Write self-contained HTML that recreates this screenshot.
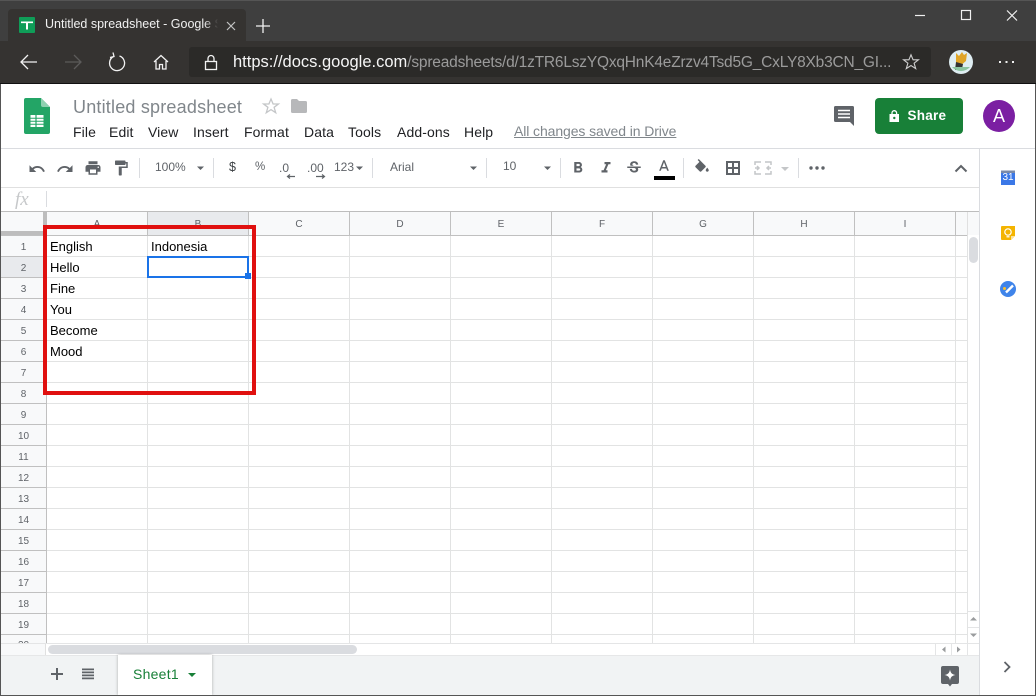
<!DOCTYPE html>
<html><head><meta charset="utf-8"><style>
html,body{margin:0;padding:0;width:1036px;height:696px;overflow:hidden;background:#fff;font-family:"Liberation Sans",sans-serif}
#r{position:relative;width:1036px;height:696px;overflow:hidden}
.a,.t{position:absolute}
.t{white-space:nowrap;line-height:1}
svg.a{overflow:visible}
.m{font-size:14px;color:#202124;top:125px;letter-spacing:.1px}
.h{font-size:10px;color:#5f6368;top:220px;width:100px;text-align:center}
.n{font-size:10px;color:#5f6368;left:1px;width:45px;text-align:center}
.c{font-size:13px;color:#000;left:50px}
.tb{font-size:12px;color:#5f6368;top:161px}
</style></head><body><div id="r">
<!-- chrome -->
<div class="a" style="left:0;top:0;width:1036px;height:41px;background:#3f3f3f"></div>
<div class="a" style="left:0;top:0;width:1036px;height:1px;background:#555"></div>
<div class="a" style="left:0;top:41px;width:1036px;height:42px;background:#353331"></div>
<div class="a" style="left:0;top:83px;width:1036px;height:1px;background:#111"></div>
<div class="a" style="left:8px;top:9px;width:238px;height:32px;background:#353331;border-radius:4px 4px 0 0"></div>
<div class="a" style="left:19px;top:17px;width:16px;height:16px;background:#0f9d58;border-radius:1px"></div>
<svg class="a" style="left:19px;top:17px" width="16" height="16"><path d="M2 4.500h12v1.600H9v6.400H7V6.100H2z" fill="#fff"/></svg>
<div class="t" style="left:45px;top:18px;font-size:12.500px;color:#f1f1f1;width:173px;overflow:hidden">Untitled spreadsheet - Google Sheets</div>
<div class="a" style="left:204px;top:16px;width:14px;height:18px;background:linear-gradient(90deg,rgba(53,51,49,0),#353331)"></div>
<svg class="a" style="left:225px;top:20px" width="12" height="12"><path d="M2 2l8 8M10 2l-8 8" stroke="#c4c4c4" stroke-width="1.200"/></svg>
<svg class="a" style="left:255px;top:18px" width="16" height="16"><path d="M8 1v14M1 8h14" stroke="#f0f0f0" stroke-width="1.300"/></svg>
<svg class="a" style="left:912px;top:8px" width="120" height="20" fill="none" stroke="#f0f0f0" stroke-width="1.200"><path d="M3 7.500h10"/><rect x="49.500" y="2.500" width="9" height="9"/><path d="M95 2.500l10 10M105 2.500l-10 10"/></svg>
<svg class="a" style="left:18px;top:50px" width="160" height="24" fill="none" stroke="#f2f2f2" stroke-width="1.300"><path d="M3 12h16M10 5l-7 7 7 7"/><path d="M47 12h16M56 5l7 7-7 7" stroke="#5c5b5a"/><path d="M95.500 6.500a7.500 7.500 0 1 0 6 -0.500M95 2.500l1 4-4 1" /><path d="M136 12l7-6.500 7 6.500M138 11v8h3.500v-4.500h3V19h3.500v-8"/></svg>
<div class="a" style="left:189px;top:47px;width:742px;height:30px;background:#2b2a28;border-radius:3px"></div>
<svg class="a" style="left:203px;top:54px" width="16" height="17" fill="none" stroke="#f2f2f2" stroke-width="1.300"><rect x="2.500" y="7.500" width="11" height="8"/><path d="M5 7.500V4.500a3 3 0 0 1 6 0v3"/></svg>
<div class="t" style="left:233px;top:54px;font-size:16.500px;color:#f5f5f5;width:660px;overflow:hidden">https://docs.google.com<span style="color:#9b9b9b;font-size:15.500px;letter-spacing:-.2px">/spreadsheets/d/1zTR6LszYQxqHnK4eZrzv4Tsd5G_CxLY8Xb3CN_GI...</span></div>
<svg class="a" style="left:902px;top:53px" width="18" height="18" fill="none" stroke="#cfcfcf" stroke-width="1.100"><path d="M9 1.800l2.100 5h5.300l-4.300 3.400 1.600 5.400L9 12.500l-4.700 3.100 1.600-5.400L1.600 6.800h5.300z"/></svg>
<svg class="a" style="left:949px;top:50px" width="24" height="24"><circle cx="12" cy="12" r="12" fill="#dfeef2"/><path d="M7 3l3 3 3-4 2 3 3-2-1 8-6 5-4-4z" fill="#e0a527"/><path d="M7 12l7 2-1 5-7 1z" fill="#333"/><path d="M3 17h18a12 12 0 0 1-18 0z" fill="#8bc4a0"/></svg>
<svg class="a" style="left:999px;top:60px" width="16" height="4" fill="#f0f0f0"><rect x="0" y="1" width="2" height="2"/><rect x="6.500" y="1" width="2" height="2"/><rect x="13" y="1" width="2" height="2"/></svg>
<!-- window edges -->
<div class="a" style="left:0;top:84px;width:1px;height:612px;background:#555;z-index:9"></div>
<div class="a" style="left:1035px;top:84px;width:1px;height:612px;background:#555;z-index:9"></div>
<div class="a" style="left:0;top:695px;width:1036px;height:1px;background:#555;z-index:9"></div>
<!-- header -->
<svg class="a" style="left:24px;top:98px" width="26" height="36"><path d="M2 0h15l9 9v25a2 2 0 0 1-2 2H2a2 2 0 0 1-2-2V2a2 2 0 0 1 2-2z" fill="#23a566"/><path d="M17 0l9 9h-7a2 2 0 0 1-2-2z" fill="#8ed1b1"/><path d="M6.500 17h13v12h-13z" fill="#fff"/><path d="M6.500 20.200h13M6.500 23.200h13M6.500 26.200h13" stroke="#23a566" stroke-width="1"/><path d="M12 17v12" stroke="#23a566" stroke-width="1.200"/></svg>
<div class="t" style="left:73px;top:98px;font-size:18px;color:#80868b;letter-spacing:.2px">Untitled spreadsheet</div>
<svg class="a" style="left:262px;top:97px" width="18" height="18" fill="none" stroke="#c4c6c8" stroke-width="1.300"><path d="M9 2l2.100 5h5.300l-4.300 3.300 1.600 5.400L9 12.600l-4.700 3.100 1.600-5.400L1.600 7h5.300z"/></svg>
<svg class="a" style="left:291px;top:99px" width="16" height="14"><path d="M1.500 0H6l2 2h6.500A1.500 1.500 0 0 1 16 3.500v9a1.500 1.500 0 0 1-1.500 1.500h-13A1.500 1.500 0 0 1 0 12.500v-11A1.500 1.500 0 0 1 1.500 0z" fill="#b7b8ba"/></svg>
<span class="t m" style="left:73px">File</span><span class="t m" style="left:109px">Edit</span><span class="t m" style="left:148px">View</span><span class="t m" style="left:193px">Insert</span><span class="t m" style="left:244px">Format</span><span class="t m" style="left:304px">Data</span><span class="t m" style="left:348px">Tools</span><span class="t m" style="left:397px">Add-ons</span><span class="t m" style="left:464px">Help</span>
<span class="t" style="left:514px;top:124px;font-size:14px;color:#80868b;text-decoration:underline;letter-spacing:-.1px">All changes saved in Drive</span>
<svg class="a" style="left:834px;top:106px" width="20" height="20"><path d="M1.500 0h17A1.500 1.500 0 0 1 20 1.500V20l-4-4H1.500A1.500 1.500 0 0 1 0 14.500v-13A1.500 1.500 0 0 1 1.500 0z" fill="#5f6368"/><path d="M4 4.500h12M4 8h12M4 11.500h12" stroke="#fff" stroke-width="1.600"/></svg>
<div class="a" style="left:875px;top:98px;width:88px;height:36px;background:#188038;border-radius:4px"></div>
<svg class="a" style="left:889px;top:109px" width="12" height="13"><path d="M1 5.500h8.500v7H1z" fill="#fff" stroke="#fff"/><path d="M3 5.500V4a2.300 2.300 0 0 1 4.600 0v1.500" fill="none" stroke="#fff" stroke-width="1.300"/><circle cx="5.300" cy="9" r="1.200" fill="#188038"/></svg>
<div class="t" style="left:907.500px;top:109px;font-size:13.500px;font-weight:700;color:#fff;letter-spacing:.25px">Share</div>
<div class="a" style="left:983px;top:100px;width:32px;height:32px;border-radius:50%;background:#7b1fa2"></div>
<div class="t" style="left:983px;top:107px;width:32px;text-align:center;font-size:18px;color:#fff">A</div>
<div class="a" style="left:1px;top:148px;width:1034px;height:1px;background:#dadce0"></div>
<div class="a" style="left:979px;top:149px;width:1px;height:546px;background:#dadce0"></div>
<!-- toolbar -->
<svg class="a" style="left:28px;top:160px" width="18" height="18" viewBox="0 0 24 24" fill="#5f6368"><path d="M12.500 8c-2.650 0-5.050.99-6.900 2.600L2 7v9h9l-3.620-3.620c1.390-1.160 3.160-1.880 5.120-1.880 3.540 0 6.550 2.310 7.600 5.500l2.370-.78C21.080 11.030 17.150 8 12.500 8z"/></svg>
<svg class="a" style="left:56px;top:160px" width="18" height="18" viewBox="0 0 24 24" fill="#5f6368"><path d="M18.400 10.600C16.550 8.990 14.150 8 11.500 8c-4.650 0-8.580 3.030-9.960 7.220L3.900 16c1.050-3.190 4.050-5.500 7.600-5.500 1.950 0 3.730.72 5.120 1.880L13 16h9V7l-3.600 3.600z"/></svg>
<svg class="a" style="left:84px;top:159px" width="18" height="18" viewBox="0 0 24 24" fill="#5f6368"><path d="M19 8H5c-1.660 0-3 1.340-3 3v6h4v4h12v-4h4v-6c0-1.660-1.340-3-3-3zm-3 11H8v-5h8v5zm3-7c-.55 0-1-.45-1-1s.45-1 1-1 1 .45 1 1-.45 1-1 1zm-1-9H6v4h12V3z"/></svg>
<svg class="a" style="left:112px;top:159px" width="18" height="18" viewBox="0 0 24 24" fill="#5f6368"><path d="M18 4V3c0-.55-.45-1-1-1H5c-.55 0-1 .45-1 1v4c0 .55.45 1 1 1h12c.55 0 1-.45 1-1V6h1v4H9v11c0 .55.45 1 1 1h2c.55 0 1-.45 1-1v-9h8V4h-3z"/></svg>
<svg class="a" style="left:0;top:0" width="1036" height="200" fill="#5f6368"><g fill="#dadce0"><rect x="139" y="158" width="1" height="20"/><rect x="213" y="158" width="1" height="20"/><rect x="372" y="158" width="1" height="20"/><rect x="486" y="158" width="1" height="20"/><rect x="560" y="158" width="1" height="20"/><rect x="683" y="158" width="1" height="20"/><rect x="798" y="158" width="1" height="20"/></g>
<path d="M197 166.500h7l-3.500 3.500zM356 166.500h7l-3.500 3.500zM470 166.500h7l-3.500 3.500zM544 166.500h7l-3.500 3.500z"/><path d="M781 167h8l-4 4z" fill="#c4c6c8"/>
<path d="M654 176h21v4h-21z" fill="#000"/>
<path d="M288 176.500h7M290 174.500l-2.500 2 2.500 2" fill="none" stroke="#5f6368" stroke-width="1.200"/><path d="M316 176.500h8M322 174.500l2.500 2-2.500 2" fill="none" stroke="#5f6368" stroke-width="1.200"/>
<g fill="none" stroke="#c4c6c8" stroke-width="1.500"><path d="M755 165v-3h6M765 162h6v3M755 171v3h6M765 174h6v-3M755 168h4M771 168h-4M757 166l2 2-2 2M769 166l-2 2 2 2"/></g>
<path d="M726 161h14v14h-14z M728 163v4h4v-4zM734 163v4h4v-4zM728 169v4h4v-4zM734 169v4h4v-4z" fill-rule="evenodd"/>
<circle cx="811" cy="168" r="1.700"/><circle cx="817" cy="168" r="1.700"/><circle cx="823" cy="168" r="1.700"/>
<path d="M955.500 171.500l5.500-5.500 5.500 5.500" fill="none" stroke="#5f6368" stroke-width="2"/>
</svg>
<svg class="a" style="left:569px;top:159px" width="18" height="18" viewBox="0 0 24 24" fill="#5f6368"><path d="M15.600 10.790c.97-.67 1.650-1.770 1.650-2.790 0-2.260-1.750-4-4-4H7v14h7.040c2.090 0 3.710-1.700 3.710-3.790 0-1.520-.86-2.820-2.150-3.420zM10 6.500h3c.83 0 1.500.67 1.500 1.500s-.67 1.500-1.500 1.500h-3v-3zm3.500 9H10v-3h3.500c.83 0 1.500.67 1.500 1.500s-.67 1.500-1.500 1.500z"/></svg>
<svg class="a" style="left:597px;top:159px" width="18" height="18" viewBox="0 0 24 24" fill="#5f6368"><path d="M10 4v3h2.210l-3.420 8H6v3h8v-3h-2.210l3.420-8H18V4z"/></svg>
<svg class="a" style="left:625px;top:159px" width="18" height="18" viewBox="0 0 24 24" fill="#5f6368"><path d="M6.850 7.080C6.850 4.370 9.450 3 12.240 3c1.640 0 3 .49 3.900 1.280.77.65 1.460 1.730 1.460 3.240h-3.010c0-.31-.05-.59-.15-.85-.29-.86-1.200-1.280-2.250-1.280-1.860 0-2.340 1.020-2.340 1.700 0 .48.25.88.74 1.210.38.25.77.48 1.410.7H7.390c-.21-.34-.54-.89-.54-1.920zM21 12v-2H3v2h9.620c1.150.45 1.960.75 1.960 1.970 0 1-.81 1.670-2.280 1.670-1.540 0-2.930-.54-2.930-2.510H6.400c0 .55.08 1.130.24 1.580.81 2.290 3.290 3.300 5.670 3.300 2.270 0 5.300-.89 5.300-4.050 0-.3-.01-1.160-.48-1.940H21V12z"/></svg>
<svg class="a" style="left:655px;top:158px" width="18" height="18" viewBox="0 0 24 24" fill="#5f6368"><path d="M11 3L5.500 17h2.250l1.120-3h6.250l1.120 3h2.250L13 3h-2zm-1.380 9L12 5.670 14.380 12H9.620z"/></svg>
<svg class="a" style="left:693px;top:159px" width="18" height="18" viewBox="0 0 24 24" fill="#5f6368"><path d="M16.560 8.940L7.620 0 6.210 1.410l2.380 2.380-5.150 5.150c-.59.59-.59 1.540 0 2.120l5.500 5.500c.29.29.68.44 1.060.44s.77-.15 1.060-.44l5.500-5.500c.59-.58.59-1.530 0-2.120zM19 11.500s-2 2.170-2 3.500c0 1.100.9 2 2 2s2-.9 2-2c0-1.330-2-3.500-2-3.500z"/></svg>
<span class="t tb" style="left:155px">100%</span><span class="t tb" style="left:229px;font-size:12.500px;color:#3c4043">$</span><span class="t tb" style="left:255px;font-size:11.500px;top:162px">%</span><span class="t tb" style="left:279px;font-size:12px;top:162px">.0</span><span class="t tb" style="left:307px;font-size:12px;top:162px">.00</span><span class="t tb" style="left:334px">123</span><span class="t tb" style="left:390px">Arial</span><span class="t tb" style="left:503px;top:160px">10</span>
<div class="a" style="left:1px;top:187px;width:978px;height:1px;background:#e0e0e0"></div>
<div class="t" style="left:15px;top:190px;font-family:'Liberation Serif',serif;font-style:italic;font-size:19px;color:#c6c8ca">fx</div>
<div class="a" style="left:46px;top:191px;width:1px;height:16px;background:#dadce0"></div>
<div class="a" style="left:1px;top:211px;width:978px;height:1px;background:#bdbdbd"></div>
<!-- grid bg -->
<div class="a" style="left:1px;top:212px;width:978px;height:23px;background:#f8f9fa"></div>
<div class="a" style="left:1px;top:236px;width:45px;height:408px;background:#f8f9fa"></div>
<div class="a" style="left:148px;top:212px;width:100px;height:23px;background:#e8eaed"></div>
<div class="a" style="left:1px;top:257px;width:45px;height:20px;background:#e8eaed"></div>
<svg class="a" style="left:0;top:0" width="1036" height="696">
<g fill="#e2e3e3"><rect x="47" y="256" width="921" height="1"/><rect x="47" y="277" width="921" height="1"/><rect x="47" y="298" width="921" height="1"/><rect x="47" y="319" width="921" height="1"/><rect x="47" y="340" width="921" height="1"/><rect x="47" y="361" width="921" height="1"/><rect x="47" y="382" width="921" height="1"/><rect x="47" y="403" width="921" height="1"/><rect x="47" y="424" width="921" height="1"/><rect x="47" y="445" width="921" height="1"/><rect x="47" y="466" width="921" height="1"/><rect x="47" y="487" width="921" height="1"/><rect x="47" y="508" width="921" height="1"/><rect x="47" y="529" width="921" height="1"/><rect x="47" y="550" width="921" height="1"/><rect x="47" y="571" width="921" height="1"/><rect x="47" y="592" width="921" height="1"/><rect x="47" y="613" width="921" height="1"/><rect x="47" y="634" width="921" height="1"/>
<rect x="147" y="236" width="1" height="408"/><rect x="248" y="236" width="1" height="408"/><rect x="349" y="236" width="1" height="408"/><rect x="450" y="236" width="1" height="408"/><rect x="551" y="236" width="1" height="408"/><rect x="652" y="236" width="1" height="408"/><rect x="753" y="236" width="1" height="408"/><rect x="854" y="236" width="1" height="408"/><rect x="955" y="236" width="1" height="408"/><rect x="967" y="236" width="1" height="408"/></g>
<g fill="#c0c0c0"><rect x="1" y="256" width="45" height="1"/><rect x="1" y="277" width="45" height="1"/><rect x="1" y="298" width="45" height="1"/><rect x="1" y="319" width="45" height="1"/><rect x="1" y="340" width="45" height="1"/><rect x="1" y="361" width="45" height="1"/><rect x="1" y="382" width="45" height="1"/><rect x="1" y="403" width="45" height="1"/><rect x="1" y="424" width="45" height="1"/><rect x="1" y="445" width="45" height="1"/><rect x="1" y="466" width="45" height="1"/><rect x="1" y="487" width="45" height="1"/><rect x="1" y="508" width="45" height="1"/><rect x="1" y="529" width="45" height="1"/><rect x="1" y="550" width="45" height="1"/><rect x="1" y="571" width="45" height="1"/><rect x="1" y="592" width="45" height="1"/><rect x="1" y="613" width="45" height="1"/><rect x="1" y="634" width="45" height="1"/>
<rect x="46" y="236" width="1" height="408"/><rect x="147" y="212" width="1" height="24"/><rect x="248" y="212" width="1" height="24"/><rect x="349" y="212" width="1" height="24"/><rect x="450" y="212" width="1" height="24"/><rect x="551" y="212" width="1" height="24"/><rect x="652" y="212" width="1" height="24"/><rect x="753" y="212" width="1" height="24"/><rect x="854" y="212" width="1" height="24"/><rect x="955" y="212" width="1" height="24"/><rect x="1" y="235" width="967" height="1"/></g>
<rect x="967" y="212" width="1" height="24" fill="#e0e0e0"/>
<rect x="43" y="212" width="4" height="24" fill="#bdbdbd"/><rect x="1" y="231" width="46" height="4" fill="#bdbdbd"/>
<rect x="969" y="237" width="9" height="26" rx="4.500" fill="#dadce0"/>
<rect x="148" y="257" width="100" height="20" fill="none" stroke="#1a73e8" stroke-width="2"/>
<!-- right scroll arrows -->
<g fill="#e4e5e6"><rect x="968" y="611" width="11" height="1"/><rect x="968" y="627" width="11" height="1"/></g>
<path d="M970 620.500h7l-3.500-3.500zM970 633.500h7l-3.500 3.500z" fill="#9a9c9e"/>
</svg>
<span class="t h" style="left:47px">A</span><span class="t h" style="left:148px">B</span><span class="t h" style="left:249px">C</span><span class="t h" style="left:350px">D</span><span class="t h" style="left:451px">E</span><span class="t h" style="left:552px">F</span><span class="t h" style="left:653px">G</span><span class="t h" style="left:754px">H</span><span class="t h" style="left:855px">I</span>
<span class="t n" style="top:243px">1</span><span class="t n" style="top:264px">2</span><span class="t n" style="top:285px">3</span><span class="t n" style="top:306px">4</span><span class="t n" style="top:327px">5</span><span class="t n" style="top:348px">6</span><span class="t n" style="top:369px">7</span><span class="t n" style="top:390px">8</span><span class="t n" style="top:411px">9</span><span class="t n" style="top:432px">10</span><span class="t n" style="top:453px">11</span><span class="t n" style="top:474px">12</span><span class="t n" style="top:495px">13</span><span class="t n" style="top:516px">14</span><span class="t n" style="top:537px">15</span><span class="t n" style="top:558px">16</span><span class="t n" style="top:579px">17</span><span class="t n" style="top:600px">18</span><span class="t n" style="top:621px">19</span>
<div class="a" style="left:1px;top:640px;width:45px;height:3px;overflow:hidden"><span class="t n" style="left:0;top:1px">20</span></div>
<span class="t c" style="top:240px">English</span><span class="t c" style="top:240px;left:151px">Indonesia</span><span class="t c" style="top:261px">Hello</span><span class="t c" style="top:282px">Fine</span><span class="t c" style="top:303px">You</span><span class="t c" style="top:324px">Become</span><span class="t c" style="top:345px">Mood</span>
<!-- selection handle and red annotation above everything in the grid -->
<svg class="a" style="left:0;top:0" width="1036" height="696">
<rect x="245" y="273" width="6" height="6" fill="#1a73e8"/>
<rect x="45" y="227" width="209" height="166" fill="none" stroke="#e0100f" stroke-width="4"/>
</svg>
<!-- h scroll -->
<div class="a" style="left:1px;top:643px;width:978px;height:12px;background:#fff;border-top:1px solid #e4e5e6;box-sizing:border-box"></div>
<div class="a" style="left:1px;top:644px;width:45px;height:11px;background:#f8f9fa;border-right:1px solid #e0e0e0;box-sizing:border-box"></div>
<div class="a" style="left:48px;top:645px;width:309px;height:9px;border-radius:5px;background:#dadce0"></div>
<svg class="a" style="left:935px;top:644px" width="44" height="11"><path d="M0.500 0v11M16.500 0v11M32.500 0v11" stroke="#e4e5e6"/><path d="M10.500 2.500v6l-3.500-3zM22 2.500v6l3.500-3z" fill="#9a9c9e"/></svg>
<!-- tab bar -->
<div class="a" style="left:1px;top:655px;width:978px;height:40px;background:#f1f3f4;border-top:1px solid #e6e7e8;box-sizing:border-box"></div>
<div class="a" style="left:118px;top:655px;width:94px;height:40px;background:#fff;box-shadow:0 0 3px rgba(0,0,0,.3)"></div>
<svg class="a" style="left:51px;top:668px" width="45" height="12" fill="#5f6368"><path d="M5 0h2v5h5v2H7v5H5V7H0V5h5z"/><path d="M31 .5h12v1.800H31zM31 3.500h12v1.800H31zM31 6.500h12v1.800H31zM31 9.500h12v1.800H31z"/></svg>
<div class="t" style="left:133px;top:667px;font-size:14px;color:#188038;letter-spacing:.25px">Sheet1</div>
<svg class="a" style="left:187px;top:672px" width="10" height="6"><path d="M1 1h8L5 5z" fill="#188038"/></svg>
<svg class="a" style="left:941px;top:666px" width="18" height="21"><path d="M2 0h14a2 2 0 0 1 2 2v14a2 2 0 0 1-2 2h-5l-2 2.500L7 18H2a2 2 0 0 1-2-2V2a2 2 0 0 1 2-2z" fill="#5f6368"/><path d="M9 3.500c.6 3.500 2 4.900 5.500 5.500-3.500.6-4.900 2-5.500 5.500-.6-3.500-2-4.900-5.500-5.500 3.500-.6 4.900-2 5.500-5.500z" fill="#fff"/></svg>
<!-- sidebar -->
<svg class="a" style="left:1001px;top:170px" width="14" height="15"><path d="M0 1h14v14H0z" fill="#3b78e7"/><path d="M0 0.500h14V3H0z" fill="#7a8aa8"/></svg>
<div class="t" style="left:1001px;top:173px;width:14px;text-align:center;font-size:10px;color:#fff">31</div>
<svg class="a" style="left:1001px;top:226px" width="14" height="14"><path d="M1 0h13v10l-4 4H1a1 1 0 0 1-1-1V1a1 1 0 0 1 1-1z" fill="#f4b400"/><path d="M10 14l4-4h-4z" fill="#fbe29a"/><circle cx="7" cy="6" r="3.200" fill="none" stroke="#fff" stroke-width="1.200"/><path d="M5.500 10.800h3" stroke="#fff" stroke-width="1.200"/></svg>
<svg class="a" style="left:1000px;top:281px" width="16" height="16"><circle cx="8" cy="8" r="8" fill="#3f84ea"/><path d="M6 11.500L13 4.500" stroke="#fff" stroke-width="2.400"/><circle cx="4.500" cy="7.500" r="1.500" fill="#fbc02d"/></svg>
<svg class="a" style="left:1003px;top:661px" width="9" height="12"><path d="M1.500 1l5 5-5 5" fill="none" stroke="#5f6368" stroke-width="1.800"/></svg>
</div></body></html>
